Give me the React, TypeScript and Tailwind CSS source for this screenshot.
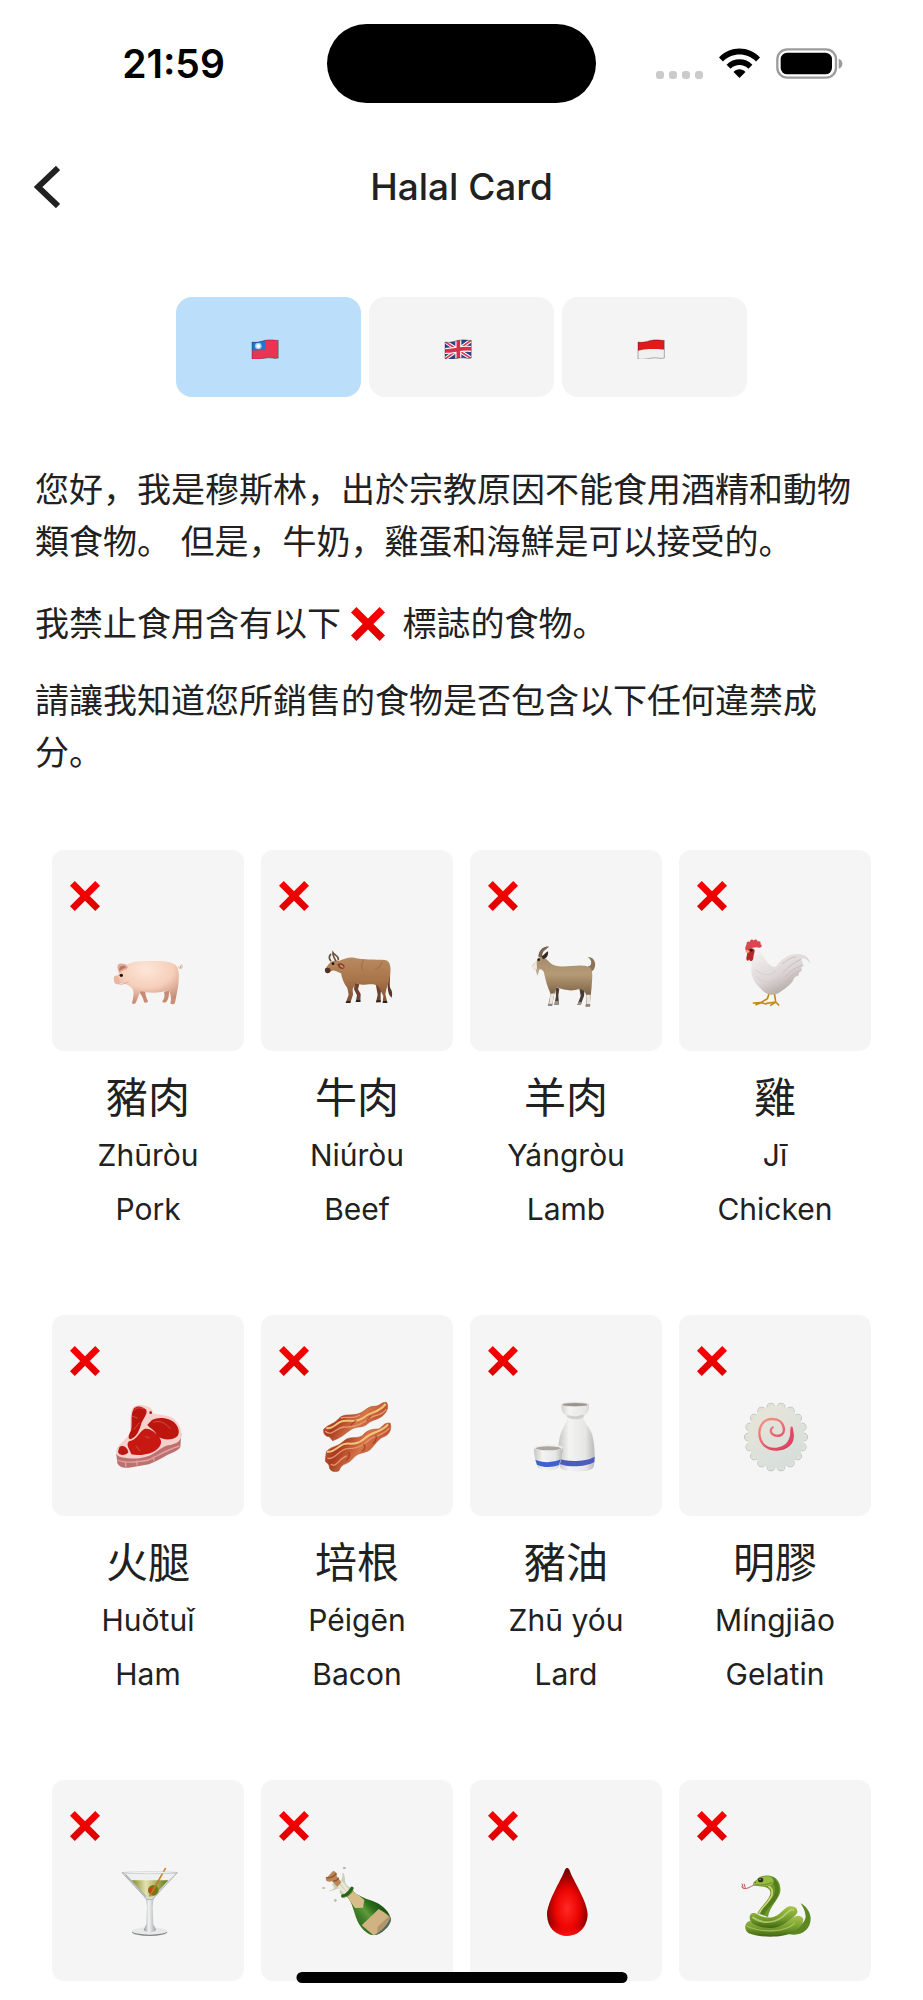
import { useState } from "react";
import type { ReactNode } from "react";
import clsx from "clsx";

function CrossMark({ className }: { className?: string }) {
  return (
    <svg viewBox="0 0 88 88" className={className} aria-hidden="true">
      <defs>
        <linearGradient id="cross" x1="0" y1="0" x2="0" y2="1">
          <stop offset="0" stopColor="#ff0000" />
          <stop offset="1" stopColor="#dc0000" />
        </linearGradient>
      </defs>
      <path
        d="M0 14 14 0 44 30 74 0 88 14 58 44 88 74 74 88 44 58 14 88 0 74 30 44z"
        fill="url(#cross)"
      />
    </svg>
  );
}

function Emoji({ viewBox, children }: { viewBox: string; children: ReactNode }) {
  return (
    <svg viewBox={viewBox} className="size-[72px]" aria-hidden="true">
      {children}
    </svg>
  );
}

function Pig() {
  return (
    <Emoji viewBox="186 288 216 216">
      <defs>
        <radialGradient id="pig" cx="0.5" cy="0.2" r="0.75">
          <stop offset="0" stopColor="#fde6d8" />
          <stop offset="0.55" stopColor="#f6cfbb" />
          <stop offset="1" stopColor="#c98f78" />
        </radialGradient>
      </defs>
      <path d="M268 454 286 452C285 466 290 474 294 484 294 489 284 489 282 486 281 474 272 466 268 454zM342 456 358 450 356 470C354 478 350 486 347 487 342 489 337 487 337 484 344 476 345 466 342 456z" fill="#c68b72" />
      <path d="M385 380C389 388 397 385 397 379 396 373 389 375 392 384" fill="none" stroke="#dba28c" strokeWidth="3" />
      <path
        d="M226 376C245 363 280 362 310 363 345 362 372 366 381 380 389 395 387 418 385 436L375 489C372 494 364 494 361 490 366 474 361 466 357 450 330 460 295 460 272 453L258 487C256 493 249 493 246 490 250 470 254 455 246 444 236 436 225 430 212 430 201 435 193 432 192 422 190 410 194 407 204 406 207 398 205 390 212 384z"
        fill="url(#pig)"
      />
      <path d="M203 386C200 374 208 369 217 371 226 370 233 376 234 384 225 391 214 392 210 400 206 396 204 391 203 386z" fill="#e3ab96" />
      <path d="M208 384C212 376 224 375 229 382 220 387 214 388 208 394z" fill="#b97864" />
      <path d="M192 412C191 424 195 433 205 431 211 427 208 416 202 408 198 406 193 408 192 412z" fill="#eab6a2" />
      <circle cx="214" cy="406" r="5" fill="#1d1210" />
      <path d="M204 431C214 436 228 430 236 424" fill="none" stroke="#cf9580" strokeWidth="2" />
    </Emoji>
  );
}

function Ox() {
  return (
    <Emoji viewBox="813 288 216 216">
      <defs>
        <linearGradient id="ox" x1="0" y1="0" x2="0" y2="1">
          <stop offset="0" stopColor="#b98a60" />
          <stop offset="0.5" stopColor="#a87449" />
          <stop offset="1" stopColor="#7d4d33" />
        </linearGradient>
      </defs>
      <path d="M1018 380C1024 410 1016 430 1021 445 1028 455 1027 466 1025 473 1016 466 1014 455 1013 440z" fill="#5d382a" />
      <path d="M914 428 928 432 924 448 932 462 931 486 917 486 921 466 912 448zM976 426 996 432 992 462 992 486 978 487 983 464z" fill="#6d4330" />
      <path
        d="M868 362C884 356 898 350 912 353 940 360 975 357 1005 360 1019 362 1023 378 1021 398 1020 414 1015 432 1010 444L1006 462 1012 488 998 489 1000 468 986 440C972 428 956 434 936 434L916 430 908 448 909 464 901 488 887 489 896 464 892 444C880 430 876 414 873 400 862 396 850 388 843 394 837 402 827 401 825 394 824 386 831 380 837 371 844 362 855 360 868 362z"
        fill="url(#ox)"
      />
      <path d="M887 489 890 483 902 484 901 489zM998 489 1000 483 1011 483 1012 489zM917 486 919 480 931 480 931 486zM978 487 980 481 992 481 992 487z" fill="#2e211e" />
      <path d="M842 362C836 354 838 347 842 343M857 362C850 350 848 344 849 338 854 346 864 346 865 358" fill="none" stroke="#67503d" strokeWidth="5" strokeLinecap="round" />
      <path d="M862 372C872 366 882 371 884 380 882 389 872 388 866 382z" fill="#7c3f2c" />
      <path d="M869 375C876 373 880 378 881 383 875 384 870 381 869 375z" fill="#dc7e63" />
      <path d="M825 393C823 385 829 382 836 384 843 386 843 393 839 397 834 402 827 400 825 393z" fill="#513129" />
      <circle cx="849" cy="371" r="4" fill="#1b1210" />
      <path d="M942 358C930 372 935 388 940 392M975 388C988 384 994 374 996 364" fill="none" stroke="#9a6a45" strokeWidth="4" opacity="0.6" />
    </Emoji>
  );
}

function Goat() {
  return (
    <Emoji viewBox="210 288 216 216">
      <defs>
        <linearGradient id="goat" x1="0" y1="0" x2="0" y2="1">
          <stop offset="0" stopColor="#a68c6c" />
          <stop offset="0.35" stopColor="#b59a76" />
          <stop offset="0.8" stopColor="#796043" />
        </linearGradient>
      </defs>
      <path d="M286 440 298 446 295 466 297 494 283 495 288 468zM358 444 374 446 372 468 362 495 352 495 362 468z" fill="#4c3a33" />
      <path d="M285 484 296 482 297 494 283 495zM356 486 366 486 362 495 352 495z" fill="#99918b" />
      <path d="M384 378C396 382 398 358 383 352 398 348 408 364 405 379 403 391 395 397 388 396z" fill="#8c7352" />
      <path
        d="M240 352C250 348 262 360 272 370 285 382 310 380 335 378 358 375 384 376 392 384 400 396 396 420 395 440L392 468 389 499 377 499 380 468C376 454 368 448 358 447 338 454 314 452 290 442L283 462 276 498 264 498 272 462C262 440 256 418 252 398 248 388 240 386 232 390 223 392 217 384 218 376z"
        fill="url(#goat)"
      />
      <path d="M272 462 283 460 277 492 267 492zM380 464 392 464 390 493 379 493z" fill="#e9e4dc" />
      <path d="M264 498 267 491 278 491 276 498zM376 500 379 492 391 492 390 500z" fill="#8c8580" />
      <path d="M235 352C235 332 248 320 266 319 268 323 262 324 256 328 247 334 246 344 247 352z" fill="#877059" />
      <path d="M238 348C238 334 248 325 259 322M243 350C244 339 250 330 260 326" fill="none" stroke="#55483c" strokeWidth="2" />
      <path d="M245 349C254 345 257 336 264 334 266 345 260 356 249 358z" fill="#352923" />
      <path d="M230 360 218 378C217 389 226 392 231 388z" fill="#eee7dc" />
      <path d="M227 389 240 385 232 407z" fill="#b6ab9c" />
      <circle cx="236" cy="359" r="4" fill="#211d20" />
    </Emoji>
  );
}

function Rooster() {
  return (
    <Emoji viewBox="837 288 216 216">
      <defs>
        <linearGradient id="rooster" x1="0.2" y1="0" x2="0.8" y2="1">
          <stop offset="0" stopColor="#f5f2f2" />
          <stop offset="0.55" stopColor="#dcd5d5" />
          <stop offset="1" stopColor="#a0958f" />
        </linearGradient>
      </defs>
      <path d="M928 458 922 476 902 488 880 489M903 488 888 494M903 488 918 492M943 458 947 486 920 490M947 486 932 496M947 486 956 495" fill="none" stroke="#c48a18" strokeWidth="5" strokeLinecap="round" strokeLinejoin="round" />
      <path
        d="M872 328C884 314 897 322 906 342 918 364 932 384 948 380 958 362 984 341 1010 342 1032 340 1048 352 1051 371 1041 355 1032 354 1022 356 1030 364 1027 370 1030 378L1023 382 1026 390 1018 396 1016 406 1004 412 997 425C982 442 968 450 956 459 938 469 918 464 906 450 886 432 872 412 874 386 876 362 870 350 872 328z"
        fill="url(#rooster)"
      />
      <path d="M1024 358C1010 362 985 380 968 400M1030 376C1010 380 990 392 976 410M1024 392C1008 396 992 408 982 420M966 372C980 362 990 352 1008 350" fill="none" stroke="#bdb4b3" strokeWidth="2" />
      <path d="M885 388C906 408 935 410 948 390M888 408C910 432 942 432 960 408" fill="none" stroke="#d0c9c9" strokeWidth="2" />
      <path d="M858 332C853 325 858 318 860 312 858 306 865 302 869 306 869 299 878 296 881 302 885 296 893 299 893 305 900 301 904 308 901 313 908 315 906 322 900 323 888 320 874 321 868 330z" fill="#d94750" />
      <path d="M864 330C869 323 880 322 884 331 884 340 880 345 880 354 879 365 870 366 867 358 865 366 858 362 859 353z" fill="#b3282c" />
      <path d="M855 337C859 330 866 329 869 334L866 338z" fill="#edb02d" />
      <circle cx="874" cy="331" r="4" fill="#27191b" />
    </Emoji>
  );
}

function Steak() {
  return (
    <Emoji viewBox="186 303 216 216">
      <path d="M199 462 202 490C207 501 222 505 236 503L297 493C315 486 335 474 352 465 370 457 386 451 391 441L394 400z" fill="#bd7070" />
      <path d="M202 480C225 490 266 486 296 480 326 466 350 450 388 438M226 484 228 500M260 482 262 496M310 470 312 482" fill="none" stroke="#e2a3a0" strokeWidth="4" />
      <path
        d="M249 322C258 313 276 314 290 319 304 322 309 330 308 340 322 345 348 344 364 352 384 362 397 388 394 408 391 427 374 433 354 436 333 441 320 459 298 467 268 478 226 478 206 469 194 461 199 445 208 435 223 420 237 410 240 394 242 370 238 340 249 322z"
        fill="#f6d0cc"
      />
      <path d="M252 325C262 316 278 319 289 330 294 343 277 357 272 377 267 392 260 410 245 416 231 421 236 403 243 392 248 373 240 344 252 325z" fill="#b9140e" />
      <path d="M306 360C324 349 359 353 374 368 386 381 393 401 378 412 361 423 336 419 321 409 319 391 297 384 292 374z" fill="#bd160f" />
      <path d="M283 387C300 382 316 398 328 412 340 427 331 445 309 456 286 466 260 467 244 463 239 447 226 435 237 424 262 420 268 394 283 387z" fill="#c81812" />
      <path d="M208 442C217 432 233 442 235 457 225 470 207 466 204 456z" fill="#b91910" />
      <path d="M251 332C260 320 276 323 282 328M251 389 269 367M310 367C330 358 350 373 362 387M258 437 270 454M285 409 299 414M244 347 263 355" fill="none" stroke="#e5615b" strokeWidth="2" />
      <circle cx="302" cy="338" r="4" fill="#a31d1d" />
    </Emoji>
  );
}

function Bacon() {
  return (
    <Emoji viewBox="813 303 216 216">
      <defs>
        <linearGradient id="bacon" x1="0" y1="0" x2="1" y2="0.4">
          <stop offset="0" stopColor="#d4764c" />
          <stop offset="0.35" stopColor="#a83a1f" />
          <stop offset="0.65" stopColor="#d77549" />
          <stop offset="1" stopColor="#b64827" />
        </linearGradient>
      </defs>
      <path d="M821 388C836 372 850 374 866 356 880 340 900 348 923 342 947 335 951 318 975 319 991 318 991 307 1009 307 1016 316 1013 330 1005 340 989 360 969 357 954 370 938 386 924 376 904 388 882 402 880 410 848 422 842 416 840 408 831 409 821 404 820 396 821 388z" fill="url(#bacon)" stroke="#b4522f" strokeWidth="2" />
      <path d="M829 384C850 390 860 365 880 363 900 358 915 371 939 354 960 334 981 343 1007 312" fill="none" stroke="#f0c478" strokeWidth="6" />
      <path d="M826 394C844 411 858 384 881 381 905 382 922 380 947 362 969 342 990 352 1009 328M872 354C890 348 909 360 930 344" fill="none" stroke="#e79a70" strokeWidth="4" />
      <path d="M829 456C840 439 861 442 879 425 899 405 918 419 937 407 954 387 970 388 987 387 1001 378 1000 369 1020 369 1026 386 1019 402 1004 409 984 415 975 435 959 450 940 462 925 455 909 475 894 495 875 487 867 512 854 518 839 514 838 500 838 488 825 490 826 480z" fill="url(#bacon)" stroke="#b4522f" strokeWidth="2" />
      <path d="M831 455C855 459 866 433 887 431 911 430 920 435 943 416 970 391 992 400 1014 373" fill="none" stroke="#f2c77c" strokeWidth="6" />
      <path d="M832 474C850 483 864 452 890 446 916 446 930 442 950 426 972 404 995 411 1018 384M842 492C859 507 867 474 890 468" fill="none" stroke="#e7936a" strokeWidth="4" />
      <path d="M895 457C903 463 896 476 888 482M940 432C950 441 943 450 935 454M977 405C983 414 975 426 969 430M902 376 919 360M950 362 963 347" fill="none" stroke="#94301b" strokeWidth="4" opacity="0.65" />
    </Emoji>
  );
}

function Sake() {
  return (
    <Emoji viewBox="210 303 216 216">
      <defs>
        <linearGradient id="sake" x1="0" y1="0" x2="1" y2="0">
          <stop offset="0" stopColor="#c6c6c4" />
          <stop offset="0.3" stopColor="#f3f3f1" />
          <stop offset="0.75" stopColor="#e6e6e4" />
          <stop offset="1" stopColor="#b9b9b8" />
        </linearGradient>
      </defs>
      <path d="M304 313C302 329 307 341 322 350 323 368 306 383 300 408 292 440 293 476 300 501 306 519 394 520 401 501 406 478 405 438 397 406 390 382 370 368 371 350 383 341 389 328 387 313z" fill="url(#sake)" />
      <path d="M321 350C335 361 359 360 371 350L370 343C358 350 337 350 323 344z" fill="#b4b4b1" opacity="0.5" />
      <ellipse cx="345" cy="313" rx="42" ry="7" fill="#deddda" />
      <ellipse cx="345" cy="314" rx="37" ry="5" fill="#99948e" />
      <path d="M294 475C320 487 377 486 404 470L403 486C376 502 322 502 297 491z" fill="#4d5bc0" />
      <path d="M222 444C221 464 227 487 234 503 244 514 284 514 295 503 304 486 307 465 308 444z" fill="url(#sake)" />
      <path d="M226 479C245 489 281 489 302 478L297 495C278 503 249 503 231 494z" fill="#3e62cc" />
      <ellipse cx="265" cy="443" rx="43" ry="9" fill="#efeeeb" />
      <ellipse cx="265" cy="445" rx="38" ry="6" fill="#aaa6a2" />
    </Emoji>
  );
}

function FishCake() {
  return (
    <Emoji viewBox="837 303 216 216">
      <defs>
        <linearGradient id="fishcake" x1="0.2" y1="0" x2="0.8" y2="1">
          <stop offset="0" stopColor="#e8e5d8" />
          <stop offset="1" stopColor="#d5dedb" />
        </linearGradient>
        <linearGradient id="swirl" x1="0" y1="0" x2="0.7" y2="1">
          <stop offset="0" stopColor="#f79a88" />
          <stop offset="1" stopColor="#df3b5a" />
        </linearGradient>
      </defs>
      {/* round dashes of zero length make the scalloped rim */}
      <ellipse cx="948" cy="411" rx="83" ry="91" fill="none" stroke="#a9b3ae" strokeWidth="26" strokeLinecap="round" pathLength="18" strokeDasharray="0 1" />
      <ellipse cx="948" cy="411" rx="83" ry="91" fill="none" stroke="#dfe1d8" strokeWidth="23" strokeLinecap="round" pathLength="18" strokeDasharray="0 1" />
      <ellipse cx="948" cy="411" rx="85" ry="93" fill="url(#fishcake)" />
      <path d="M938 382C927 390 934 406 948 407 963 409 972 402 972 388 970 366 955 356 935 357 911 358 898 377 898 400 899 431 920 449 950 449 980 448 999 431 998 406L995 383" fill="none" stroke="url(#swirl)" strokeWidth="7" strokeLinecap="round" />
      <path d="M918 440C950 460 997 443 1001 404L997 384C987 382 993 400 989 410 983 439 951 449 918 440z" fill="#e14766" />
    </Emoji>
  );
}

function Cocktail() {
  return (
    <Emoji viewBox="186 288 216 216">
      <defs>
        <linearGradient id="olive-drink" x1="0" y1="0" x2="1" y2="0">
          <stop offset="0" stopColor="#7c8518" />
          <stop offset="0.4" stopColor="#e5e2b0" />
          <stop offset="1" stopColor="#66750b" />
        </linearGradient>
        <linearGradient id="stem" x1="0" y1="0" x2="1" y2="0">
          <stop offset="0" stopColor="#8c9294" />
          <stop offset="0.4" stopColor="#f2f3f3" />
          <stop offset="1" stopColor="#9da2a4" />
        </linearGradient>
      </defs>
      <ellipse cx="299" cy="486" rx="53" ry="12" fill="#83898a" />
      <ellipse cx="299" cy="483" rx="53" ry="11" fill="#e7e9e9" />
      <path d="M287 382 311 382 308 410 310 462 319 480C308 490 290 490 281 480L289 462 291 410z" fill="url(#stem)" />
      <path d="M216 308 382 308 315 380C310 392 288 392 283 380z" fill="#d8dcdd" stroke="#949b9e" strokeWidth="2" />
      <path d="M221 311 376 311 354 333 245 333z" fill="#eff1f1" />
      <path d="M243 331 355 331 311 378C306 383 291 383 286 378z" fill="url(#olive-drink)" />
      <path d="M226 313 288 380" stroke="#aab0b2" strokeWidth="4" />
      <circle cx="310" cy="361" r="16" fill="#727b11" />
      <circle cx="304" cy="361" r="8" fill="#cb421b" />
      <path d="M346 296 300 377" stroke="#bb7b28" strokeWidth="5" strokeLinecap="round" />
      <path d="M346 296 329 330" stroke="#e0ad63" strokeWidth="2" />
      <ellipse cx="299" cy="308" rx="82" ry="3" fill="#f4f5f5" stroke="#a5abad" strokeWidth="1" />
    </Emoji>
  );
}

function Champagne() {
  return (
    <Emoji viewBox="813 288 216 216">
      <defs>
        <linearGradient id="bottle" x1="0.1" y1="0.8" x2="0.8" y2="0.2">
          <stop offset="0" stopColor="#205915" />
          <stop offset="0.35" stopColor="#3f7f28" />
          <stop offset="0.5" stopColor="#5f9a3c" />
          <stop offset="0.65" stopColor="#2d701c" />
          <stop offset="1" stopColor="#0d3c0d" />
        </linearGradient>
        <clipPath id="bottle-shape">
          <path d="M907 360 891 380C908 398 911 427 922 452 933 476 952 494 971 496 995 493 1021 469 1023 447 1018 425 1000 408 980 398 953 387 925 381 907 360z" />
        </clipPath>
      </defs>
      <path d="M845 343C861 357 845 359 835 364 857 361 866 350 873 358 865 365 868 374 884 378L904 352C889 350 884 340 885 325 882 307 877 305 877 311 879 325 873 335 864 334z" fill="#c8d0bc" />
      <path d="M868 350 888 370M874 337 894 362" stroke="#eae6d2" strokeWidth="9" strokeLinecap="round" />
      <path d="M827 327 849 303C858 303 863 313 860 318L874 337 862 350 846 334C838 337 826 334 827 327z" fill="#bd8555" />
      <path d="M828 322C839 327 853 320 859 310M850 333C857 334 864 328 866 323" fill="none" stroke="#885434" strokeWidth="4" />
      <g clipPath="url(#bottle-shape)">
        <rect x="880" y="350" width="150" height="150" fill="url(#bottle)" />
        <path d="M907 360 891 380 915 414 939 413 943 390z" fill="#d8bd8b" />
        <path d="M935 466 986 417C1001 425 1014 435 1026 448L978 502z" fill="#d1b282" />
        <path d="M983 470 1023 433 1028 450 980 499z" fill="#8d7954" opacity="0.5" />
        <path d="M966 498C988 490 1012 468 1021 443L1030 456 978 505z" fill="#4e6665" />
      </g>
      <path d="M878 378C892 378 899 365 906 355" fill="none" stroke="#29631a" strokeWidth="10" strokeLinecap="round" />
      <path d="M884 381C895 380 903 372 908 363" fill="none" stroke="#5e943c" strokeWidth="3" strokeLinecap="round" />
      <ellipse cx="821" cy="354" rx="5" ry="3" fill="#c5bba7" />
      <ellipse cx="856" cy="391" rx="4" ry="5" fill="#cdb8a0" />
      <ellipse cx="883" cy="294" rx="5" ry="3" fill="#b9b1a2" />
    </Emoji>
  );
}

function BloodDrop() {
  return (
    <Emoji viewBox="210 288 216 216">
      <defs>
        <radialGradient id="drop" cx="0.5" cy="0.6" r="0.56">
          <stop offset="0" stopColor="#ff2a24" />
          <stop offset="0.5" stopColor="#ed0503" />
          <stop offset="1" stopColor="#770000" />
        </radialGradient>
        <linearGradient id="drop-shine" x1="0" y1="0" x2="0" y2="1">
          <stop offset="0.82" stopColor="#ff0000" stopOpacity="0" />
          <stop offset="1" stopColor="#ff1410" />
        </linearGradient>
      </defs>
      <path d="M315 299C318 292 325 292 328 299 339 331 382 393 383 433 382 474 354 497 322 497 288 497 262 474 261 434 262 393 303 331 315 299z" fill="url(#drop)" />
      <path d="M315 299C318 292 325 292 328 299 339 331 382 393 383 433 382 474 354 497 322 497 288 497 262 474 261 434 262 393 303 331 315 299z" fill="url(#drop-shine)" />
    </Emoji>
  );
}

function Snake() {
  return (
    <Emoji viewBox="837 288 216 216">
      <defs>
        <linearGradient id="snake" x1="0" y1="0" x2="0" y2="1">
          <stop offset="0" stopColor="#a8c64c" />
          <stop offset="0.6" stopColor="#719a2c" />
          <stop offset="1" stopColor="#3f6512" />
        </linearGradient>
      </defs>
      <path d="M882 345C870 350 864 357 851 356L844 350M856 354 852 341M850 355 846 341" fill="none" stroke="#bd5c58" strokeWidth="3" />
      <path d="M980 492 990 466C1014 474 1034 462 1037 440 1036 422 1028 410 1022 400 1037 408 1051 424 1052 445 1052 474 1032 494 1002 494z" fill="#5c8722" />
      <path d="M870 452C852 458 851 480 866 490 896 503 966 504 992 490 1013 479 1029 468 1030 447 1020 430 1000 437 983 454 950 478 900 470 870 452z" fill="url(#snake)" />
      <path d="M860 468C900 488 974 489 1005 459" fill="none" stroke="#b4cc69" strokeWidth="4" opacity="0.7" />
      <path d="M892 430C901 411 922 396 930 375 934 362 928 354 912 350L884 347C876 344 879 336 889 331 895 319 913 314 932 318 954 323 963 343 961 364 957 390 929 408 924 441z" fill="#6c982c" />
      <path d="M897 430C904 414 924 401 935 377 939 362 935 353 925 349" fill="none" stroke="#d5d47b" strokeWidth="5" />
      <path d="M907 432C912 412 938 401 948 376 956 352 947 332 932 325" fill="none" stroke="#456e17" strokeWidth="12" opacity="0.65" />
      <path d="M880 340C892 329 901 317 927 319 942 322 945 337 935 344 920 350 900 348 885 348z" fill="#97ba42" />
      <path d="M885 344C903 347 922 345 937 337" fill="none" stroke="#4b721a" strokeWidth="2" />
      <path d="M869 440C872 426 883 427 895 434 917 447 940 445 958 431 974 419 979 406 994 409 1011 410 1018 424 1007 435 989 450 965 473 935 474 905 475 866 465 869 440z" fill="url(#snake)" />
      <path d="M877 441C909 466 950 459 976 433 986 424 993 416 1002 420" fill="none" stroke="#bfd674" strokeWidth="5" opacity="0.8" />
      <ellipse cx="902" cy="330" rx="8" ry="7" fill="#2b301b" />
      <circle cx="900" cy="328" r="2" fill="#d2e0af" />
      <circle cx="886" cy="337" r="2" fill="#3c5c16" />
    </Emoji>
  );
}

const flagShape = "M3 21C18 25 34 17 49 15 62 13 74 17 82 16V69C70 73 60 66 45 69 31 71 18 75 3 72z";

function Flag({ id, children }: { id: string; children: ReactNode }) {
  return (
    <svg viewBox="0 0 108 72" className="h-6 w-9" aria-hidden="true">
      <defs>
        <clipPath id={id}>
          <path d={flagShape} />
        </clipPath>
      </defs>
      <g clipPath={`url(#${id})`}>{children}</g>
      <path d={flagShape} fill="none" stroke="#000000" strokeOpacity="0.3" strokeWidth="3" />
    </svg>
  );
}

const languages = [
  {
    value: "zh",
    label: "中文",
    flag: (
      <Flag id="flag-tw">
        <rect width="90" height="76" fill="#eb3453" />
        <path d="M0 12H43V44L0 47z" fill="#2475cc" />
        <circle cx="22" cy="33" r="10" fill="#9fcdf2" />
        <circle cx="22" cy="33" r="6" fill="#ffffff" />
      </Flag>
    ),
  },
  {
    value: "en",
    label: "English",
    flag: (
      <Flag id="flag-gb">
        <rect width="90" height="76" fill="#29458e" />
        <path d="M0 18 84 72M0 74 84 14" stroke="#ffffff" strokeWidth="11" />
        <path d="M0 18 84 72M0 74 84 14" stroke="#d93a50" strokeWidth="5" />
        <path d="M43 10V76M0 48C30 49 50 37 85 42" fill="none" stroke="#ffffff" strokeWidth="18" />
        <path d="M43 10V76M0 48C30 49 50 37 85 42" fill="none" stroke="#d8304a" strokeWidth="11" />
      </Flag>
    ),
  },
  {
    value: "id",
    label: "Bahasa Indonesia",
    flag: (
      <Flag id="flag-id">
        <rect width="90" height="76" fill="#f1f0f0" />
        <path d="M0 10H90V43C62 46 50 37 0 48z" fill="#df1b1b" />
      </Flag>
    ),
  },
];

type Ingredient = {
  icon: ReactNode;
  name?: string;
  pinyin?: string;
  english?: string;
};

const ingredients: Ingredient[] = [
  { icon: <Pig />, name: "豬肉", pinyin: "Zhūròu", english: "Pork" },
  { icon: <Ox />, name: "牛肉", pinyin: "Niúròu", english: "Beef" },
  { icon: <Goat />, name: "羊肉", pinyin: "Yángròu", english: "Lamb" },
  { icon: <Rooster />, name: "雞", pinyin: "Jī", english: "Chicken" },
  { icon: <Steak />, name: "火腿", pinyin: "Huǒtuǐ", english: "Ham" },
  { icon: <Bacon />, name: "培根", pinyin: "Péigēn", english: "Bacon" },
  { icon: <Sake />, name: "豬油", pinyin: "Zhū yóu", english: "Lard" },
  { icon: <FishCake />, name: "明膠", pinyin: "Míngjiāo", english: "Gelatin" },
  { icon: <Cocktail /> },
  { icon: <Champagne /> },
  { icon: <BloodDrop /> },
  { icon: <Snake /> },
];

function StatusBar() {
  return (
    <div className="grid grid-cols-[1fr_269px_1fr] items-center pt-6 text-black">
      <span className="pl-5 text-center text-[39px] leading-10 font-semibold">21:59</span>
      <div className="h-[79px] rounded-full bg-black" />
      <div className="flex h-8 items-end justify-end gap-4 pr-20 pb-px">
        <div className="flex gap-[5px]">
          {[0, 1, 2, 3].map((dot) => (
            <span key={dot} className="size-2 rounded-[3px] bg-[#cbcbcb]" />
          ))}
        </div>
        <svg viewBox="0 0 124 92" className="h-[31px] w-[41px]" aria-hidden="true">
          <path d="M0 28C34-8 90-8 124 28L112 40C85 12 39 12 12 40zM23 50C44 28 80 28 101 50L89 62C74 47 50 47 35 62zM44 72C53 61 71 61 80 72L62 90z" fill="#000000" />
        </svg>
        <svg viewBox="0 0 201 93" className="h-[31px] w-[67px]" aria-hidden="true">
          <rect x="4" y="4" width="176" height="85" rx="30" fill="none" stroke="#9c9c9c" strokeWidth="7" />
          <rect x="14" y="14" width="154" height="65" rx="20" fill="#000000" />
          <path d="M188 32C203 37 203 57 188 62z" fill="#9c9c9c" />
        </svg>
      </div>
    </div>
  );
}

export default function App() {
  const [language, setLanguage] = useState("zh");

  return (
    <div className="h-screen overflow-hidden bg-white font-['Inter','Noto_Sans_CJK_SC',sans-serif] text-[#212121]">
      <StatusBar />
      <header className="mt-14 grid h-14 grid-cols-[1fr_auto_1fr] items-center px-[34px]">
        <button type="button" aria-label="Back" className="justify-self-start">
          <svg viewBox="0 0 26 42" className="h-[42px] w-[26px]" aria-hidden="true">
            <path d="M24 2 4 21 24 40" fill="none" stroke="currentColor" strokeWidth="6" />
          </svg>
        </button>
        <h1 className="text-[37px] leading-10 font-medium">Halal Card</h1>
      </header>

      <div className="mt-[82px] flex justify-center gap-2">
        {languages.map(({ value, label, flag }) => (
          <button
            key={value}
            type="button"
            aria-label={label}
            aria-pressed={language === value}
            onClick={() => setLanguage(value)}
            className={clsx(
              "flex h-[100px] w-[185px] items-center justify-center rounded-2xl",
              language === value ? "bg-[#bbdefb]" : "bg-[#f4f4f4]",
            )}
          >
            {flag}
          </button>
        ))}
      </div>

      <section lang="zh-Hans" className="mt-[67px] pr-10 pl-[35px] text-[34px] leading-[52px]">
        <p>您好，我是穆斯林，出於宗教原因不能食用酒精和動物類食物。 但是，牛奶，雞蛋和海鮮是可以接受的。</p>
        <p className="mt-[30px]">
          我禁止食用含有以下 <CrossMark className="inline size-[34px] align-[-5px]" />
          <span className="ml-[18px]">標誌的食物。</span>
        </p>
        <p className="mt-[25px]">請讓我知道您所銷售的食物是否包含以下任何違禁成分。</p>
      </section>

      <ul className="mt-[71px] grid grid-cols-4 gap-x-[17px] gap-y-[79px] px-[52px]">
        {ingredients.map(({ icon, name, pinyin, english }, index) => (
          <li key={index} className="text-center">
            <div className="flex h-[201px] flex-col rounded-xl bg-[#f5f5f5] pt-[31px]">
              <CrossMark className="ml-[18px] size-[30px]" />
              <div className="mt-[25px] flex justify-center">{icon}</div>
            </div>
            {name && (
              <>
                <p lang="zh-Hans" className="mt-[21px] text-[42px] leading-[52px]">{name}</p>
                <p className="mt-1 text-3xl leading-[54px]">{pinyin}</p>
                <p className="text-3xl leading-[54px]">{english}</p>
              </>
            )}
          </li>
        ))}
      </ul>

      <div className="fixed bottom-[17px] left-1/2 h-[11px] w-[331px] -translate-x-1/2 rounded-full bg-black" />
    </div>
  );
}
